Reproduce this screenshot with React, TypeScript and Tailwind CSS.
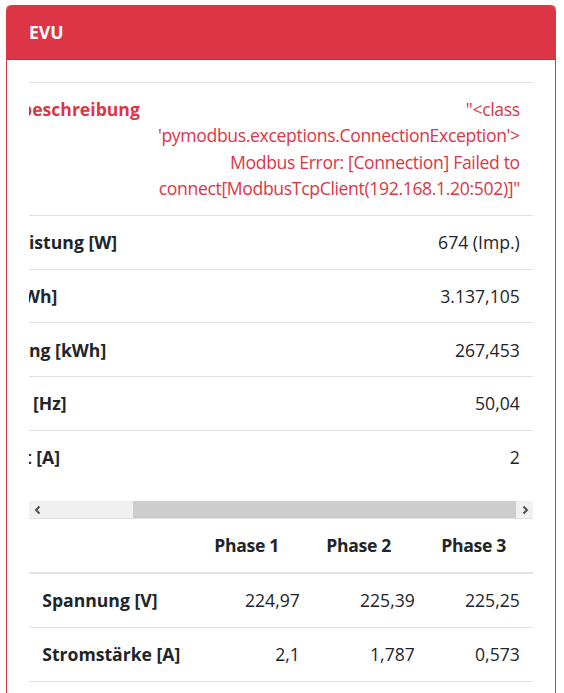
import React from "react";

const FONT = { fontFamily: '"Open Sans", "Liberation Sans", sans-serif' };

const evuRows: { label: React.ReactNode; value: React.ReactNode }[] = [
  {
    label: <span className="-ml-[8px] text-[#dc3545]">beschreibung</span>,
    value: (
      <span className="tracking-[-0.35px] text-[#dc3545]">
        "&lt;class
        <br />
        'pymodbus.exceptions.ConnectionException'&gt;
        <br />
        Modbus Error: [Connection] Failed to
        <br />
        connect[ModbusTcpClient(192.168.1.20:502)]"
      </span>
    ),
  },
  { label: <span>istung [W]</span>, value: "674 (Imp.)" },
  { label: <span className="-ml-[6px]">Wh]</span>, value: "3.137,105" },
  { label: <span>ng [kWh]</span>, value: "267,453" },
  { label: <span className="pl-[4px]">[Hz]</span>, value: "50,04" },
  { label: <span className="-ml-[5px]">t [A]</span>, value: "2" },
];

const phaseRows = [
  { label: "Spannung [V]", values: ["224,97", "225,39", "225,25"] },
  { label: "Stromstärke [A]", values: ["2,1", "1,787", "0,573"] },
];

function Chevron(props: { dir: "left" | "right" }) {
  return (
    <svg width="10" height="10" viewBox="0 0 10 10">
      <path
        d={props.dir === "left" ? "M6.5 1.5 L3 5 L6.5 8.5" : "M3.5 1.5 L7 5 L3.5 8.5"}
        fill="none"
        stroke="#505050"
        strokeWidth="2"
      />
    </svg>
  );
}

function FakeScrollbar() {
  return (
    <div className="flex h-[17px] bg-[#f0f0f0]">
      <div className="flex w-[17px] items-center justify-center">
        <Chevron dir="left" />
      </div>
      <div className="flex flex-1">
        <div className="w-[87px]" />
        <div className="flex-1 bg-[#cdcdcd]" />
      </div>
      <div className="flex w-[17px] items-center justify-center">
        <Chevron dir="right" />
      </div>
    </div>
  );
}

export default function App() {
  return (
    <div className="bg-white pl-[6px] pt-[5px]" style={FONT}>
      <div className="w-[550px] overflow-hidden rounded-[4.4px] border border-[#dc3545] text-[17.6px] leading-[26.4px] text-[#212529]">
        <div className="border-b border-black/15 bg-[#dc3545] px-[22px] py-[13.2px] font-bold text-white">
          EVU
        </div>

        <div className="p-[22px]">
          {/* erste Tabelle, nach rechts gescrollt */}
          <div className="overflow-hidden">
            <table className="mb-[17.6px] w-full">
              <tbody>
                {evuRows.map((row, i) => (
                  <tr key={i}>
                    <td className="whitespace-nowrap border-t border-[#dee2e6] py-[13.2px] align-top font-bold">
                      {row.label}
                    </td>
                    <td className="border-t border-[#dee2e6] py-[13.2px] pr-[13.2px] text-right align-top">
                      {row.value}
                    </td>
                  </tr>
                ))}
              </tbody>
            </table>
            <FakeScrollbar />
          </div>

          <table className="w-full">
            <colgroup>
              <col className="w-[172px]" />
              <col className="w-[112px]" />
              <col className="w-[115px]" />
              <col className="w-[105px]" />
            </colgroup>
            <thead>
              <tr>
                <th className="border-t border-b-2 border-[#dee2e6] px-[13.2px] py-[13.2px] text-left" />
                {["Phase 1", "Phase 2", "Phase 3"].map((p) => (
                  <th
                    key={p}
                    className="whitespace-nowrap border-t border-b-2 border-[#dee2e6] px-[13.2px] py-[13.2px] text-left font-bold tracking-[-0.3px]"
                  >
                    {p}
                  </th>
                ))}
              </tr>
            </thead>
            <tbody>
              {phaseRows.map((row) => (
                <tr key={row.label}>
                  <td className="whitespace-nowrap border-t border-b border-[#dee2e6] px-[13.2px] py-[13.2px] font-bold">
                    {row.label}
                  </td>
                  {row.values.map((v, i) => (
                    <td
                      key={i}
                      className="border-t border-b border-[#dee2e6] px-[13.2px] py-[13.2px] text-right"
                    >
                      {v}
                    </td>
                  ))}
                </tr>
              ))}
            </tbody>
          </table>
        </div>
      </div>
    </div>
  );
}
